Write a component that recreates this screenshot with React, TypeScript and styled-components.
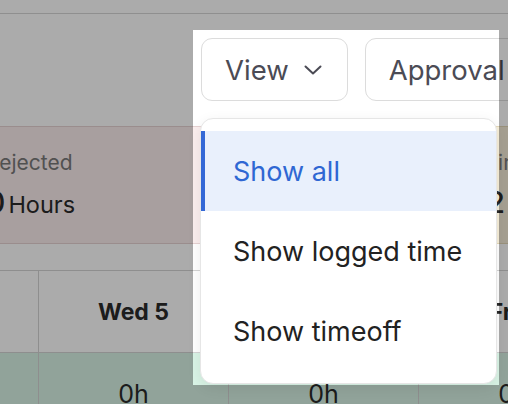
import styled, { createGlobalStyle } from 'styled-components'

const GlobalStyle = createGlobalStyle`
  html, body {
    margin: 0;
    padding: 0;
    background: #ffffff;
    font-family: Inter, "Noto Sans", "Liberation Sans", sans-serif;
  }
`

const Page = styled.div`
  position: relative;
  width: 508px;
  height: 404px;
  overflow: hidden;
  background: #ffffff;
`
const TopBar = styled.div`
  height: 13px;
  border-bottom: 1px solid #d6d6d6;
`
const Toolbar = styled.div`
  display: flex;
  gap: 17px;
  margin-top: 24px;
  padding-left: 201px;
`
const Dropdown = styled.div`
  position: relative;
  flex-shrink: 0;
`
const ToolButton = styled.button`
  display: flex;
  align-items: center;
  gap: 15px;
  height: 63px;
  padding: 0 25px 0 23px;
  border: 1.5px solid #dcdcdc;
  border-radius: 11px;
  background: #ffffff;
  color: #4b4b55;
  font-family: inherit;
  font-size: 27.5px;
  white-space: nowrap;
  flex-shrink: 0;
`
const Menu = styled.ul`
  position: absolute;
  top: calc(100% + 17px);
  left: -1px;
  z-index: 3;
  width: 295px;
  margin: 0;
  padding: 12px 0;
  list-style: none;
  background: #ffffff;
  border: 1px solid #e6e6e6;
  border-radius: 13px;
  box-shadow: 0 4px 14px rgba(0, 0, 0, 0.08);
`
const MenuItem = styled.li<{ $active?: boolean }>`
  display: flex;
  align-items: center;
  height: 80px;
  padding-left: 32px;
  font-size: 27px;
  color: ${p => (p.$active ? '#2f67d3' : '#222222')};
  background: ${p => (p.$active ? '#e9f0fc' : 'transparent')};
  box-shadow: ${p => (p.$active ? 'inset 4px 0 0 #3468d6' : 'none')};
`
const Cards = styled.div`
  display: flex;
  gap: 14px;
  margin-top: 25px;
  margin-left: -28px;
`
const Card = styled.div<{ $bg: string; $line: string }>`
  flex-shrink: 0;
  width: 465px;
  height: 118px;
  box-sizing: border-box;
  padding: 22px 13px 0;
  background: ${p => p.$bg};
  border: 1px solid ${p => p.$line};
  border-radius: 4px;
`
const CardLabel = styled.div`
  font-size: 21px;
  line-height: 27px;
  color: #7a7a7a;
`
const CardValue = styled.div`
  margin-top: 13px;
  display: flex;
  align-items: baseline;
  gap: 3px;
  color: #2a2a2a;
  line-height: 26px;
`
const Big = styled.span`
  font-size: 30px;
  font-weight: 500;
`
const Unit = styled.span`
  font-size: 23.5px;
`
const Table = styled.div`
  display: grid;
  grid-template-columns: 39px repeat(4, 190px);
  margin-top: 26px;
  border-top: 1px solid #d4d4d4;
`
const Cell = styled.div<{ $row: 'head' | 'body' }>`
  display: flex;
  align-items: center;
  justify-content: center;
  height: 81px;
  border-right: 1px solid #d4d4d4;
  border-bottom: 1px solid #d4d4d4;
  background: ${p => (p.$row === 'body' ? '#d9f4e6' : '#ffffff')};
  color: #2a2a2a;
  font-size: ${p => (p.$row === 'head' ? '23px' : '25px')};
  font-weight: ${p => (p.$row === 'head' ? 700 : 400)};
  white-space: nowrap;
`
const Spotlight = styled.div`
  position: absolute;
  left: 193px;
  top: 30px;
  width: 306px;
  height: 355px;
  z-index: 2;
  pointer-events: none;
  box-shadow: 0 0 0 2000px rgba(0, 0, 0, 0.33);
`

const Chevron = () => (
  <svg width="18" height="10" viewBox="0 0 18 10" fill="none">
    <polyline
      points="1.5,1.5 9,8.5 16.5,1.5"
      stroke="#4b4b55"
      strokeWidth="2"
      strokeLinecap="round"
      strokeLinejoin="round"
    />
  </svg>
)

const days = ['Tue 4', 'Wed 5', 'Thu 6', 'Fri 7', 'Sat 8']

export default function App() {
  return (
    <>
      <GlobalStyle />
      <Page>
        <TopBar />
        <Toolbar>
          <Dropdown>
            <ToolButton>
              View
              <Chevron />
            </ToolButton>
            <Menu>
              <MenuItem $active>Show all</MenuItem>
              <MenuItem>Show logged time</MenuItem>
              <MenuItem>Show timeoff</MenuItem>
            </Menu>
          </Dropdown>
          <ToolButton>
            Approval
            <Chevron />
          </ToolButton>
        </Toolbar>
        <Cards>
          <Card $bg="#fbeeee" $line="#e6d2d2">
            <CardLabel>Rejected</CardLabel>
            <CardValue>
              <Big>0</Big>
              <Unit>Hours</Unit>
            </CardValue>
          </Card>
          <Card $bg="#f6eed8" $line="#e4d8b8">
            <CardLabel>Unlimited</CardLabel>
            <CardValue>
              <Big>1.2</Big>
              <Unit>Hours</Unit>
            </CardValue>
          </Card>
        </Cards>
        <Table>
          {days.map((d, i) => (
            <Cell key={d} $row="head">
              {i === 0 ? '' : d}
            </Cell>
          ))}
          {days.map(d => (
            <Cell key={d + 'b'} $row="body">
              {d === 'Tue 4' ? '' : '0h'}
            </Cell>
          ))}
        </Table>
        <Spotlight />
      </Page>
    </>
  )
}
